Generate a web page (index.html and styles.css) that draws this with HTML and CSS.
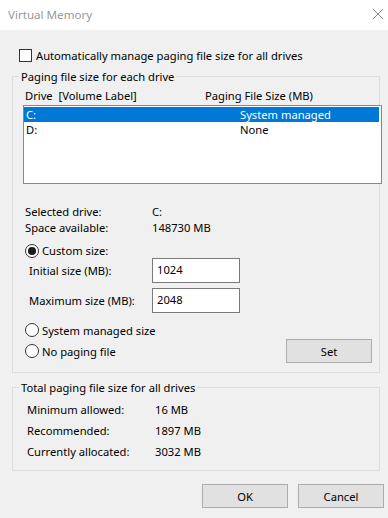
FILE: index.html
```html
<!DOCTYPE html>
<html lang="en">
<head>
    <meta charset="UTF-8">
    <title>Virtual Memory</title>
    <link rel="stylesheet" href="styles.css">
</head>
<body>
    <div class="titlebar">
        <span class="title">Virtual Memory</span>
        <svg class="close" width="12" height="12" viewBox="0 0 12 12">
            <path d="M1 1 L11 11 M11 1 L1 11" stroke="#8a8a8a" stroke-width="1" fill="none"/>
        </svg>
    </div>

    <div class="dialog">
        <div class="check-row">
            <span class="checkbox"></span>
            <span>Automatically manage paging file size for all drives</span>
        </div>

        <fieldset class="group group-drives">
            <legend>Paging file size for each drive</legend>
            <div class="group-body">
                <div class="list-head">
                    <span class="col-drive">Drive&nbsp; [Volume Label]</span>
                    <span>Paging File Size (MB)</span>
                </div>
                <div class="listbox">
                    <div class="list-row selected">
                        <span class="col-drive">C:</span>
                        <span>System managed</span>
                    </div>
                    <div class="list-row">
                        <span class="col-drive">D:</span>
                        <span>None</span>
                    </div>
                </div>

                <div class="info">
                    <div class="info-row"><span class="info-label">Selected drive:</span><span>C:</span></div>
                    <div class="info-row"><span class="info-label">Space available:</span><span>148730 MB</span></div>
                </div>

                <div class="radio-row first">
                    <span class="radio checked"></span>
                    <span>Custom size:</span>
                </div>
                <div class="size-row">
                    <label for="initial">Initial size (MB):</label>
                    <input type="text" id="initial" value="1024">
                </div>
                <div class="size-row second">
                    <label for="maximum">Maximum size (MB):</label>
                    <input type="text" id="maximum" value="2048">
                </div>

                <div class="radio-row managed">
                    <span class="radio"></span>
                    <span>System managed size</span>
                </div>
                <div class="set-row">
                    <div class="radio-row">
                        <span class="radio"></span>
                        <span>No paging file</span>
                    </div>
                    <button class="btn btn-set">Set</button>
                </div>
            </div>
        </fieldset>

        <fieldset class="group group-total">
            <legend>Total paging file size for all drives</legend>
            <div class="group-body">
                <div class="total-row"><span class="total-label">Minimum allowed:</span><span>16 MB</span></div>
                <div class="total-row"><span class="total-label">Recommended:</span><span>1897 MB</span></div>
                <div class="total-row"><span class="total-label">Currently allocated:</span><span>3032 MB</span></div>
            </div>
        </fieldset>

        <div class="actions">
            <button class="btn">OK</button>
            <button class="btn">Cancel</button>
        </div>
    </div>
</body>
</html>
```

FILE: styles.css
```css
body {
    margin: 0;
    background: #f0f0f0;
    font-family: 'Noto Sans', sans-serif;
    font-size: 11.2px;
    line-height: 15px;
    color: #000;
}

.titlebar {
    height: 30px;
    background: #fff;
    display: flex;
    align-items: center;
    justify-content: space-between;
    padding: 0 4px 0 8px;
}
.title {
    color: #999;
    font-size: 11.6px;
    margin-top: -1px;
}
.close {
    margin-top: -2px;
}

.dialog {
    padding: 0 8px 0 12px;
}

.check-row {
    display: flex;
    align-items: center;
    height: 14px;
    margin-top: 18px;
    padding-left: 7px;
}
.checkbox {
    width: 11px;
    height: 11px;
    border: 1px solid #333;
    background: #fff;
    margin-right: 4px;
}

.group {
    margin: 0;
    padding: 0;
    min-width: 0;
    border: 1px solid #dcdcdc;
}
.group legend {
    margin-left: 6px;
    padding: 0 2px;
}

.group-drives {
    margin-top: 7px;
}
.group-drives .group-body {
    padding: 4px 0 9px 10px;
}

.list-head {
    display: flex;
    padding-left: 2px;
    height: 17px;
}
.col-drive {
    width: 180px;
}
.list-row .col-drive {
    width: 214px;
}

.listbox {
    width: 357px;
    height: 75px;
    border: 1px solid #828790;
    background: #fff;
    padding: 1px 0;
}
.list-row {
    display: flex;
    height: 15px;
    line-height: 15px;
    overflow: hidden;
    padding-left: 2px;
    margin-right: 2px;
}
.list-row.selected {
    background: #0078d7;
    color: #fff;
}

.info {
    margin-top: 20px;
    padding-left: 2px;
}
.info-row {
    display: flex;
    height: 16px;
}
.info-label {
    width: 127px;
}

.radio-row {
    display: flex;
    align-items: center;
    height: 15px;
    padding-left: 2px;
}
.radio-row.first {
    margin-top: 7px;
}
.radio-row.managed {
    margin-top: 9px;
    height: 16px;
}
.radio {
    box-sizing: border-box;
    width: 14px;
    height: 14px;
    border: 1px solid #333;
    border-radius: 50%;
    background: #fff;
    margin-right: 3px;
    display: flex;
    align-items: center;
    justify-content: center;
}
.radio.checked::after {
    content: "";
    width: 8px;
    height: 8px;
    border-radius: 50%;
    background: #1a1a1a;
}

.size-row {
    display: flex;
    align-items: center;
    padding-left: 6px;
}
.size-row.second {
    margin-top: 5px;
}
.size-row label {
    width: 123px;
}
.size-row input {
    box-sizing: border-box;
    width: 88px;
    height: 25px;
    border: 1px solid #7a7a7a;
    background: #fff;
    font: inherit;
    padding: 0 0 3px 4px;
    margin: 0;
}

.set-row {
    display: flex;
    align-items: center;
    justify-content: space-between;
    margin-top: 1px;
    padding-right: 7px;
}

.btn {
    box-sizing: border-box;
    width: 86px;
    height: 24px;
    background: #e1e1e1;
    border: 1px solid #adadad;
    font: inherit;
    color: #000;
    padding: 0;
    margin: 0;
}

.group-total {
    margin-top: 7px;
}
.group-total .group-body {
    padding: 4px 0 8px 14px;
}
.total-row {
    display: flex;
    height: 21px;
    align-items: center;
}
.total-label {
    width: 128px;
}

.actions {
    display: flex;
    justify-content: flex-end;
    gap: 10px;
    margin-top: 13px;
    margin-right: -4px;
}
```
